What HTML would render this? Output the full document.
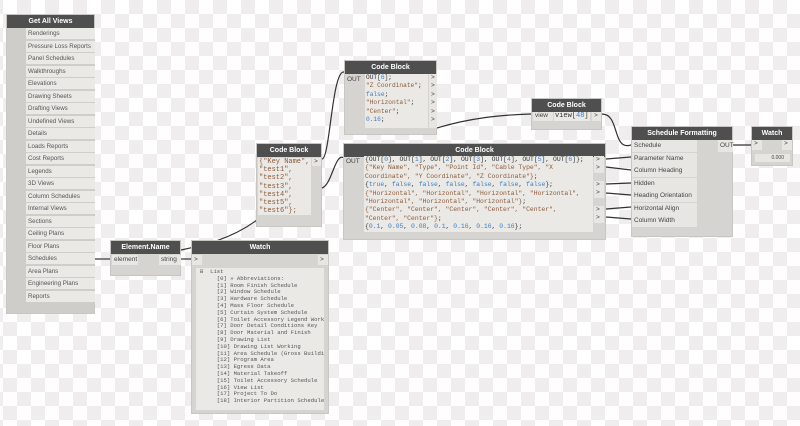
<!DOCTYPE html>
<html><head><meta charset="utf-8">
<style>
*{margin:0;padding:0;box-sizing:border-box}
body{width:800px;height:426px;overflow:hidden;position:relative;font-family:"Liberation Sans",sans-serif;
background-color:#fff;
background-image:conic-gradient(#efeded 0 25%,#fff 0 50%,#efeded 0 75%,#fff 0);
background-size:28px 28px;background-position:3px 0;}
.n{position:absolute;background:#d6d4d0;border:1px solid #c8c6c2}
.h{background:#4f4f4f;color:#fff;font-size:7px;font-weight:bold;text-align:center;height:13px;line-height:13px}
.a{position:absolute;font-size:6.5px;color:#444}
.cb{position:absolute;background:#ebe9e6;font-family:"Liberation Mono",monospace;font-size:6.2px;line-height:8.2px;color:#333;padding-left:1px;white-space:pre;overflow:hidden}
.s{color:#8a5a3a}.b{color:#3a7fc4}
.port{position:absolute;background:#e8e6e3;font-size:6.5px;color:#444;height:8px;line-height:8px;padding-left:2px}
.li{position:absolute;left:19px;width:69px;height:12px;border-bottom:1px solid #d0cec9;background:#ebe9e6;font-size:6.2px;line-height:12px;padding-left:2px;color:#555}
svg{position:absolute;left:0;top:0}
</style></head><body>
<svg width="800" height="426"><g stroke="#333" stroke-width="1.2" fill="none">
<path d="M95 259 L110 259"/>
<path d="M181 259 L191 259"/>
<path d="M181 250 C200 246,230 240,257 220"/>
<path d="M322 159 C330 159,332 70,344 72"/>
<path d="M322 188 C332 185,335 152,344 158"/>
<path d="M437 128 C470 118,500 115,531 114"/>
<path d="M602 114 C620 114,612 151,631 145"/>
<path d="M606 159 L631 157"/>
<path d="M606 167 L631 170"/>
<path d="M606 184 L631 183"/>
<path d="M606 193 L631 195"/>
<path d="M606 209 L631 207"/>
<path d="M606 217 L631 219"/>
<path d="M733 145 L751 145"/>
</g></svg>

<div class="n" style="left:6px;top:14px;width:89px;height:300px;background:#cfcdc9">
<div class="h">Get All Views</div>
<div style="position:relative">
<div class="li" style="top:0">Renderings</div>
<div class="li" style="top:12.5px">Pressure Loss Reports</div>
<div class="li" style="top:25px">Panel Schedules</div>
<div class="li" style="top:37.5px">Walkthroughs</div>
<div class="li" style="top:50px">Elevations</div>
<div class="li" style="top:62.5px">Drawing Sheets</div>
<div class="li" style="top:75px">Drafting Views</div>
<div class="li" style="top:87.5px">Undefined Views</div>
<div class="li" style="top:100px">Details</div>
<div class="li" style="top:112.5px">Loads Reports</div>
<div class="li" style="top:125px">Cost Reports</div>
<div class="li" style="top:137.5px">Legends</div>
<div class="li" style="top:150px">3D Views</div>
<div class="li" style="top:162.5px">Column Schedules</div>
<div class="li" style="top:175px">Internal Views</div>
<div class="li" style="top:187.5px">Sections</div>
<div class="li" style="top:200px">Ceiling Plans</div>
<div class="li" style="top:212.5px">Floor Plans</div>
<div class="li" style="top:225px">Schedules</div>
<div class="li" style="top:237.5px">Area Plans</div>
<div class="li" style="top:250px">Engineering Plans</div>
<div class="li" style="top:262.5px">Reports</div>
</div></div>

<div class="n" style="left:256px;top:143px;width:66px;height:84px">
<div class="h">Code Block</div>
<div class="cb" style="left:1px;top:14px;width:53px;height:57px;font-size:7px"><span class="s">{"Key Name",
"test1",
"test2",
"test3",
"test4",
"test5",
"test6"};</span></div>
<div class="port" style="left:55px;top:14px;width:9px">&gt;</div>
</div>

<div class="n" style="left:110px;top:240px;width:71px;height:36px">
<div class="h">Element.Name</div>
<div class="port" style="left:1px;top:14px;width:26px;height:10px;line-height:10px">element</div>
<div class="port" style="left:48px;top:14px;width:22px;height:10px;line-height:10px">string</div>
</div>

<div class="n" style="left:191px;top:240px;width:138px;height:174px">
<div class="h">Watch</div>
<div class="port" style="left:0;top:14px;width:10px;height:10px;line-height:10px">&gt;</div>
<div class="port" style="left:126px;top:14px;width:10px;height:10px;line-height:10px">&gt;</div>
<div class="cb" style="left:4px;top:27px;width:128px;height:142px;font-size:5.6px;line-height:6.8px;color:#555;padding:1px 0 0 4px">⊟  List
     [0] » Abbreviations:
     [1] Room Finish Schedule
     [2] Window Schedule
     [3] Hardware Schedule
     [4] Mass Floor Schedule
     [5] Curtain System Schedule
     [6] Toilet Accessory Legend Worki
     [7] Door Detail Conditions Key
     [8] Door Material and Finish
     [9] Drawing List
     [10] Drawing List Working
     [11] Area Schedule (Gross Buildin
     [12] Program Area
     [13] Egress Data
     [14] Material Takeoff
     [15] Toilet Accessory Schedule
     [16] View List
     [17] Project To Do
     [18] Interior Partition Schedule</div>
</div>

<div class="n" style="left:344px;top:60px;width:93px;height:75px">
<div class="h">Code Block</div>
<div class="a" style="left:2px;top:15px">OUT</div>
<div class="cb" style="left:20px;top:13px;width:63px;height:54px;line-height:8.4px">OUT[<span class="b">6</span>];
<span class="s">"Z Coordinate"</span>;
<span class="b">false</span>;
<span class="s">"Horizontal"</span>;
<span class="s">"Center"</span>;
<span class="b">0.16</span>;</div>
<div class="port" style="left:84px;top:13px;width:8px;height:54px;line-height:8.4px">&gt;<br>&gt;<br>&gt;<br>&gt;<br>&gt;<br>&gt;</div>
</div>

<div class="n" style="left:531px;top:98px;width:71px;height:32px">
<div class="h">Code Block</div>
<div class="port" style="left:1px;top:13px;width:20px;height:9px">view</div>
<div class="cb" style="left:22px;top:13px;width:36px;height:9px;font-size:7px">view[<span class="b">48</span>];</div>
<div class="port" style="left:60px;top:13px;width:9px;height:9px">&gt;</div>
</div>

<div class="n" style="left:343px;top:143px;width:263px;height:97px">
<div class="h">Code Block</div>
<div class="a" style="left:2px;top:14px">OUT</div>
<div class="cb" style="left:20px;top:12px;width:229px;height:76px;line-height:8.4px;font-size:6.4px">{OUT[<span class="b">0</span>], OUT[<span class="b">1</span>], OUT[<span class="b">2</span>], OUT[<span class="b">3</span>], OUT[<span class="b">4</span>], OUT[<span class="b">5</span>], OUT[<span class="b">6</span>]};
<span class="s">{"Key Name", "Type", "Point Id", "Cable Type", "X
Coordinate", "Y Coordinate", "Z Coordinate"}</span>;
{<span class="b">true</span>, <span class="b">false</span>, <span class="b">false</span>, <span class="b">false</span>, <span class="b">false</span>, <span class="b">false</span>, <span class="b">false</span>};
<span class="s">{"Horizontal", "Horizontal", "Horizontal", "Horizontal",
"Horizontal", "Horizontal", "Horizontal"}</span>;
<span class="s">{"Center", "Center", "Center", "Center", "Center",
"Center", "Center"}</span>;
{<span class="b">0.1</span>, <span class="b">0.05</span>, <span class="b">0.08</span>, <span class="b">0.1</span>, <span class="b">0.16</span>, <span class="b">0.16</span>, <span class="b">0.16</span>};</div>
<div class="port" style="left:250px;top:12px;width:10px;height:17px;line-height:8.4px">&gt;<br>&gt;</div>
<div class="port" style="left:250px;top:37px;width:10px;height:17px;line-height:8.4px">&gt;<br>&gt;</div>
<div class="port" style="left:250px;top:62px;width:10px;height:17px;line-height:8.4px">&gt;<br>&gt;</div>
</div>

<div class="n" style="left:631px;top:126px;width:102px;height:111px">
<div class="h">Schedule Formatting</div>
<div class="port" style="left:0;top:13px;width:65px;height:12px;line-height:12px">Schedule</div>
<div class="port" style="left:0;top:25.5px;width:65px;height:12px;line-height:12px">Parameter Name</div>
<div class="port" style="left:0;top:38px;width:65px;height:12px;line-height:12px">Column Heading</div>
<div class="port" style="left:0;top:50.5px;width:65px;height:12px;line-height:12px">Hidden</div>
<div class="port" style="left:0;top:63px;width:65px;height:12px;line-height:12px">Heading Orientation</div>
<div class="port" style="left:0;top:75.5px;width:65px;height:12px;line-height:12px">Horizontal Align</div>
<div class="port" style="left:0;top:88px;width:65px;height:12px;line-height:12px">Column Width</div>
<div class="port" style="left:86px;top:13px;width:15px;height:12px;line-height:12px">OUT</div>
</div>

<div class="n" style="left:751px;top:126px;width:42px;height:40px">
<div class="h">Watch</div>
<div class="port" style="left:0;top:13px;width:10px;height:10px">&gt;</div>
<div class="port" style="left:30px;top:13px;width:10px;height:10px">&gt;</div>
<div class="port" style="left:3px;top:27px;width:35px;height:8px;font-size:5px;text-align:right;padding-right:6px">0.000</div>
</div>
</body></html>
